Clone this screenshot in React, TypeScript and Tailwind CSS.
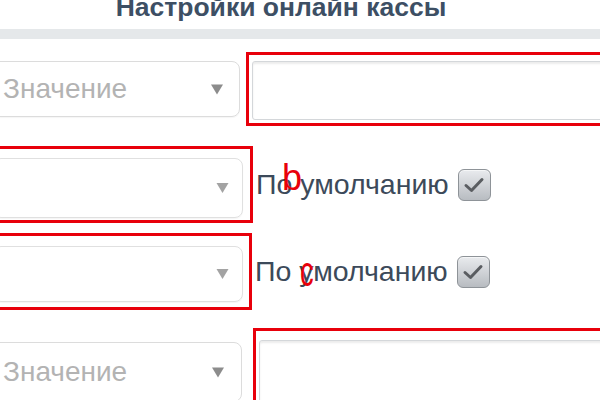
import React from "react";

function Arrow({ dark }: { dark?: boolean }) {
  return (
    <svg width={dark ? 12 : 13} height={dark ? 11 : 10} viewBox="0 0 12 10" className="shrink-0">
      <path d="M0 0 H12 L6 10 Z" fill={dark ? "#8c8c8c" : "#a3a3a3"} />
    </svg>
  );
}

function Checkbox() {
  return (
    <div className="w-[33px] h-[32px] rounded-[6px] border border-[#8e9398] bg-gradient-to-b from-[#e9ebee] to-[#b8bcc1] flex items-center justify-center shadow-[inset_0_1px_0_#f5f6f7]">
      <svg width="22" height="18" viewBox="0 0 22 18">
        <path d="M3 9.5 L8.5 14.5 L19 3.5" fill="none" stroke="#5a5d61" strokeWidth="3" strokeLinecap="round" strokeLinejoin="round" />
      </svg>
    </div>
  );
}

export default function App() {
  return (
    <div className="w-[600px] h-[400px] overflow-hidden bg-white relative font-['Liberation_Sans',Arial,sans-serif]">
      {/* title */}
      <div className="h-[29px] flex justify-center pr-[38px]">
        <div className="-mt-[6px] text-[26.5px] leading-[26px] font-bold text-[#3d4f64] whitespace-nowrap">
          Настройки онлайн кассы
        </div>
      </div>
      <div className="h-[10px] bg-[#e5e8ea]" />

      {/* row 1 */}
      <div className="flex items-center mt-[13px]">
        <div className="-ml-[8px] w-[248px] h-[56px] rounded-[8px] border border-[#dcdcdc] flex items-center justify-between pl-[10px] pr-[16px] shadow-[0_1px_1px_rgba(0,0,0,0.04)]">
          <span className="text-[28px] text-[#b3b3b3] leading-none">Значение</span>
          <Arrow dark />
        </div>
        <div className="ml-[6px] -mr-[20px] flex-1 h-[74px] border-[3px] border-[#e8000b] pt-[6px] pb-[3px] pl-[3px]">
          <div className="h-full border border-[#d4d7da] rounded-[3px] shadow-[inset_0_2px_2px_rgba(0,0,0,0.08)]" />
        </div>
      </div>

      {/* row 2 */}
      <div className="flex items-center mt-[20px]">
        <div className="-ml-[10px] w-[263px] h-[77px] border-[3px] border-[#e8000b] pt-[9px] pb-[2px] pr-[7px]">
          <div className="h-full rounded-[8px] border border-[#e0e0e0] flex items-center justify-end pr-[13px] shadow-[0_1px_1px_rgba(0,0,0,0.04)]">
            <Arrow />
          </div>
        </div>
        <div className="relative ml-[3px] flex items-center">
          <span className="text-[28.5px] leading-none text-[#3c4a5a] whitespace-nowrap">По умолчанию</span>
          <span className="absolute left-[26px] -top-[9px] text-[36px] leading-none text-[#e8000b]">b</span>
          <div className="ml-[9px]">
            <Checkbox />
          </div>
        </div>
      </div>

      {/* row 3 */}
      <div className="flex items-center mt-[10px]">
        <div className="-ml-[10px] w-[262px] h-[77px] border-[3px] border-[#e8000b] pt-[10px] pb-[5px] pr-[6px]">
          <div className="h-full rounded-[8px] border border-[#e0e0e0] flex items-center justify-end pr-[13px] shadow-[0_1px_1px_rgba(0,0,0,0.04)]">
            <Arrow />
          </div>
        </div>
        <div className="relative ml-[3px] flex items-center">
          <span className="text-[28.5px] leading-none text-[#3c4a5a] whitespace-nowrap">По умолчанию</span>
          <span className="absolute left-[45px] -top-[5px] text-[42px] leading-none text-[#e8000b] scale-x-[0.65] origin-left">c</span>
          <div className="ml-[9px]">
            <Checkbox />
          </div>
        </div>
      </div>

      {/* row 4 */}
      <div className="flex items-start mt-[18px]">
        <div className="-ml-[8px] w-[250px] h-[60px] mt-[14px] rounded-[8px] border border-[#dcdcdc] flex items-center justify-between pl-[10px] pr-[17px]">
          <span className="text-[28px] text-[#b3b3b3] leading-none">Значение</span>
          <Arrow dark />
        </div>
        <div className="ml-[11px] -mr-[20px] flex-1 h-[80px] border-[3px] border-[#e8000b] pt-[9px] pl-[3px]">
          <div className="h-full border border-[#d4d7da] rounded-[3px] shadow-[inset_0_2px_2px_rgba(0,0,0,0.08)]" />
        </div>
      </div>
    </div>
  );
}
